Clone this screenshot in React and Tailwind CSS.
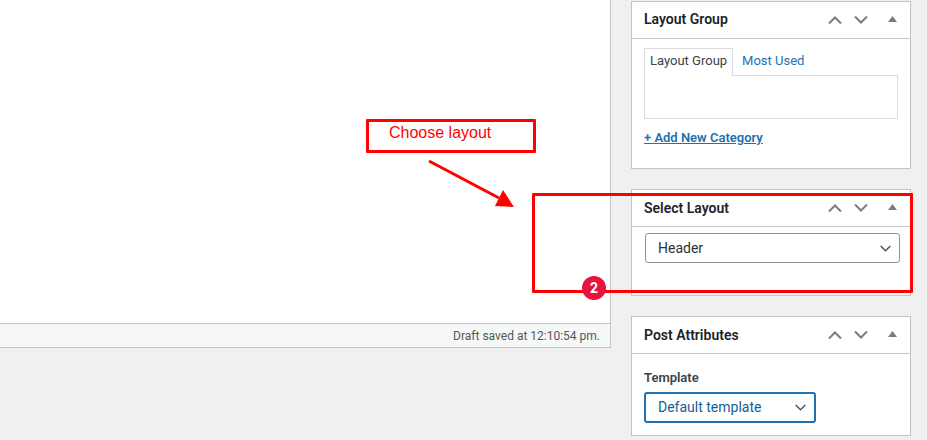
import React from 'react';

const Chevron = ({ up }) => (
    <svg width="14" height="8" viewBox="0 0 14 8" fill="none" stroke="#787c82" strokeWidth="2">
        <path d={up ? 'M1 7.5 L7 1.5 L13 7.5' : 'M1 .5 L7 6.5 L13 .5'} />
    </svg>
);

const Metabox = ({ title, className, titleClass = '', children }) => (
    <div className={`bg-white border border-[#c3c4c7] ${className}`}>
        <div className="h-[37px] border-b border-[#c3c4c7] flex items-center pl-3 pr-[13px]">
            <h2 className={`text-[14px] font-semibold text-[#1d2327] flex-1 leading-none ${titleClass}`}>{title}</h2>
            <div className="flex items-center gap-[12px]">
                <Chevron up />
                <Chevron />
                <svg className="ml-[8px] mb-[3px]" width="9" height="6" viewBox="0 0 9 6">
                    <path d="M4.5 0 L9 6 L0 6 Z" fill="#787c82" />
                </svg>
            </div>
        </div>
        {children}
    </div>
);

const SelectBox = ({ label, className, textClass }) => (
    <div className={`flex items-center justify-between rounded-[3px] bg-white ${className}`}>
        <span className={`text-[14px] ${textClass}`}>{label}</span>
        <svg width="11" height="7" viewBox="0 0 11 7" fill="none" stroke="#50575e" strokeWidth="1.5">
            <path d="M.7 1 L5.5 5.8 L10.3 1" />
        </svg>
    </div>
);

export default function App() {
    return (
        <div className="relative w-[927px] h-[440px] overflow-hidden flex bg-[#f0f0f1] font-['Roboto',sans-serif]">
            <div className="w-[611px] h-[348px] flex flex-col border-r border-b border-[#c3c4c7]">
                <div className="flex-1 bg-white" />
                <div className="h-[24px] bg-[#f6f7f7] border-t border-[#c3c4c7] flex items-center justify-end pr-[10px] text-[12px] text-[#50575e]">
                    Draft saved at 12:10:54 pm.
                </div>
            </div>

            <div className="ml-5 w-[280px] pt-px flex flex-col">
                <Metabox title="Layout Group" className="h-[168px]" titleClass="mb-[2px]">
                    <div className="px-3 pt-[9px]">
                        <div className="flex text-[13px] h-[27px]">
                            <div className="relative z-10 h-[28px] bg-white border border-b-0 border-[#dcdcde] px-[5px] pb-[3px] flex items-center text-[#3c434a]">
                                Layout Group
                            </div>
                            <div className="pl-[9px] pb-[1px] flex items-center text-[#2271b1]">Most Used</div>
                        </div>
                        <div className="h-[44px] border border-[#dcdcde] bg-white" />
                        <a className="block mt-[9px] text-[13px] font-semibold text-[#2271b1] underline">+ Add New Category</a>
                    </div>
                </Metabox>

                <Metabox title="Select Layout" className="h-[107px] mt-[20px]">
                    <div className="pl-[13px] pt-[6px]">
                        <SelectBox label="Header" className="w-[255px] h-[30px] border border-[#8c8f94] pl-3 pr-[8px]" textClass="text-[#2c3338]" />
                    </div>
                </Metabox>

                <Metabox title="Post Attributes" className="h-[120px] mt-[20px]">
                    <div className="px-3 pt-[16px]">
                        <div className="text-[13px] font-semibold text-[#3c434a] leading-4 mb-[6px]">Template</div>
                        <SelectBox label="Default template" className="w-[172px] h-[31px] border-2 border-[#2271b1] pl-[12px] pr-[8px]" textClass="text-[#135e96]" />
                    </div>
                </Metabox>
            </div>

            {/* annotations drawn on top of the screenshot */}
            <div className="absolute left-[366px] top-[119px] w-[170px] h-[34px] border-[3px] rounded-[1px] border-[#ff0000] pl-[20px] text-[16px] leading-[22px] text-[#ff0000] font-['Liberation_Sans',sans-serif]">
                Choose layout
            </div>
            <svg className="absolute left-[425px] top-[157px]" width="95" height="55" viewBox="0 0 95 55">
                <path d="M4 4 L74 41" stroke="#ff0000" strokeWidth="3" fill="none" />
                <path d="M89 50 L70 49 L78 33 Z" fill="#ff0000" />
            </svg>
            <div className="absolute left-[532px] top-[193px] w-[381px] h-[100px] border-[3px] rounded-[1px] border-[#ff0000]" />
            <div className="absolute left-[582px] top-[276px] w-6 h-6 rounded-full bg-[#e8143c] flex items-center justify-center text-white text-[14px] font-bold">
                2
            </div>
        </div>
    );
}
